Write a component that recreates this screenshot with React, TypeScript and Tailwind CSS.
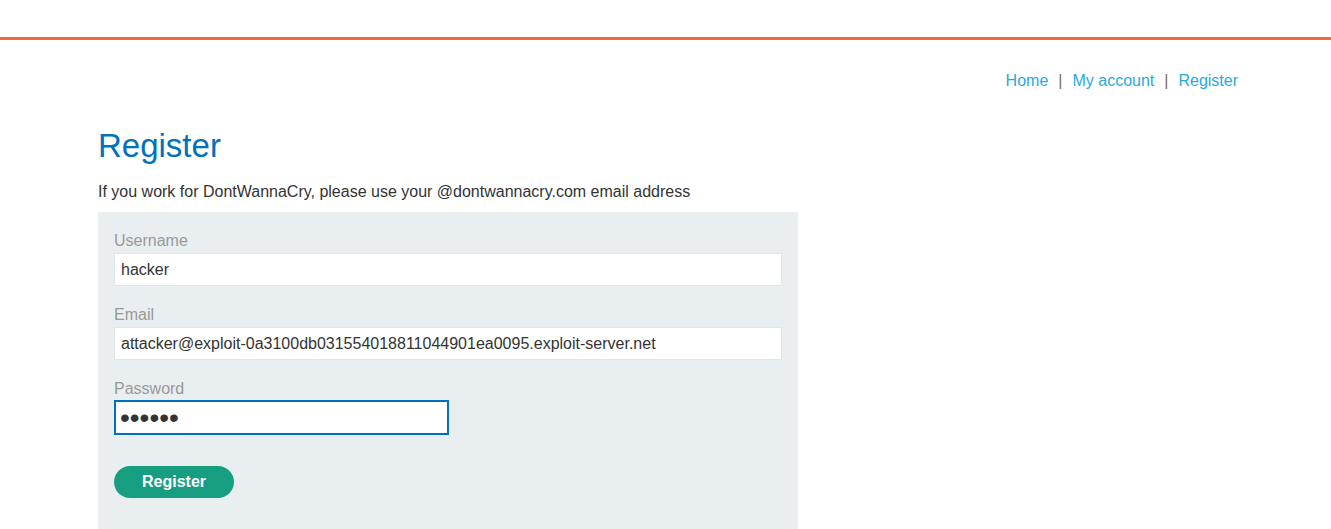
export default function App() {
  return (
    <div className="min-h-[529px] bg-white text-[#333] font-['Liberation_Sans',Arial,sans-serif]">
      <div className="h-[37px]" />
      <div className="h-[3px] bg-[#f4673a]" />
      <div className="w-[1140px] ml-[98px]">
        <nav className="flex justify-end items-center pt-[21px] h-[61px] text-[16px] text-[#29a9e1]">
          <a className="leading-[20px]">Home</a>
          <span className="mx-[10px] text-[#7d6a55]">|</span>
          <a className="leading-[20px]">My account</a>
          <span className="mx-[10px] text-[#7d6a55]">|</span>
          <a className="leading-[20px]">Register</a>
        </nav>
        <h1 className="mt-[25px] text-[33px] leading-[40px] text-[#0071bc]">Register</h1>
        <p className="mt-[15px] text-[16px] leading-[22px] text-[#333]">
          If you work for DontWannaCry, please use your @dontwannacry.com email address
        </p>
        <form className="mt-[9px] w-[700px] bg-[#e9eef0] px-[16px] pt-[19px] pb-[40px]">
          <label className="block text-[16px] leading-[20px] text-[#999]">Username</label>
          <input
            readOnly
            value="hacker"
            className="mt-[2px] block w-full h-[33px] bg-white border border-[#e3e6e8] px-[6px] text-[16px] text-[#333] outline-none"
          />
          <label className="block mt-[19px] text-[16px] leading-[20px] text-[#999]">Email</label>
          <input
            readOnly
            value="attacker@exploit-0a3100db031554018811044901ea0095.exploit-server.net"
            className="mt-[2px] block w-full h-[33px] bg-white border border-[#e3e6e8] px-[6px] text-[16px] text-[#333] outline-none"
          />
          <label className="block mt-[19px] text-[16px] leading-[20px] text-[#999]">Password</label>
          <input
            readOnly
            type="password"
            value="peter1"
            className="mt-[1px] block w-[335px] h-[35px] bg-white border-2 border-[#0071bc] px-[4px] text-[28px] text-[#333] outline-none"
          />
          <button
            type="button"
            className="mt-[31px] block w-[120px] h-[32px] rounded-full bg-[#179e80] text-white font-bold text-[16px]"
          >
            Register
          </button>
        </form>
      </div>
    </div>
  );
}
